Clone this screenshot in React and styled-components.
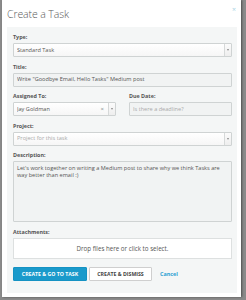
import React from "react";
import styled, { createGlobalStyle } from "styled-components";

const GlobalStyle = createGlobalStyle`
  html, body {
    margin: 0;
    padding: 0;
    background: #8a8a8a;
    font-family: "Open Sans", "DejaVu Sans", sans-serif;
  }
  * { box-sizing: border-box; }
`;

const Overlay = styled.div`
  width: 246px;
  height: 300px;
  padding-left: 2px;
  overflow: hidden;
`;

const Modal = styled.div`
  width: 239px;
  height: 297px;
  background: #ffffff;
  box-shadow: 1px 0 2px rgba(0, 0, 0, 0.45);
  padding: 0 4px 0 5px;
  display: flex;
  flex-direction: column;
`;

const Header = styled.header`
  height: 27px;
  display: flex;
  align-items: center;
  justify-content: space-between;
  position: relative;
`;

const Heading = styled.h1`
  margin: 0;
  font-size: 10.5px;
  font-weight: 300;
  color: #5a5a5a;
  letter-spacing: -0.1px;
`;

const Close = styled.span`
  position: absolute;
  right: 1px;
  top: 6px;
  font-size: 7px;
  line-height: 7px;
  color: #a9d3e4;
`;

const Panel = styled.div`
  background: #f4f6f6;
  padding: 6px 5px 12px 6px;
  display: flex;
  flex-direction: column;
`;

const Row = styled.div`
  display: flex;
  gap: 13px;
`;

const Field = styled.div`
  flex: 1;
  display: flex;
  flex-direction: column;
  margin-bottom: 5.5px;
`;

const Label = styled.label`
  height: 8px;
  line-height: 8px;
  font-size: 5.4px;
  font-weight: 700;
  color: #555;
  margin-bottom: 2px;
`;

const Box = styled.div`
  height: ${(p) => p.$h || 14}px;
  border: 1px solid #cfd3d3;
  border-radius: 1px;
  background: ${(p) =>
    p.$white ? "linear-gradient(#ffffff, #f6f6f6)" : "#f1f3f3"};
  display: flex;
  align-items: ${(p) => (p.$top ? "flex-start" : "center")};
  font-size: 5.6px;
  line-height: 7px;
  color: ${(p) => (p.$muted ? "#aaa" : "#555")};
  padding: ${(p) => (p.$top ? "3px 3px" : "0 0 0 3px")};
`;

const Value = styled.span`
  flex: 1;
  white-space: nowrap;
  overflow: hidden;
`;

const Clear = styled.span`
  color: #888;
  font-size: 6px;
  margin-right: 4px;
`;

const Arrow = styled.span`
  width: 7px;
  align-self: stretch;
  border-left: 1px solid #d6d9d9;
  background: linear-gradient(#fbfbfb, #eeeeee);
  display: flex;
  align-items: center;
  justify-content: center;
  &::after {
    content: "";
    border-left: 1.5px solid transparent;
    border-right: 1.5px solid transparent;
    border-top: 2px solid #888;
  }
`;

const Drop = styled.div`
  height: 21px;
  border: 1px solid #dde0e0;
  background: #ffffff;
  display: flex;
  align-items: center;
  justify-content: center;
  font-size: 6.2px;
  color: #555;
`;

const Actions = styled.div`
  display: flex;
  align-items: center;
  gap: 2px;
  margin-top: 3px;
`;

const Button = styled.button`
  height: 14px;
  padding: 0 ${(p) => (p.$primary ? 4 : 4)}px;
  width: ${(p) => p.$w}px;
  font-family: inherit;
  font-size: 5.2px;
  font-weight: 700;
  text-transform: uppercase;
  border-radius: 1px;
  border: 1px solid ${(p) => (p.$primary ? "#1592c3" : "#cfcfcf")};
  background: ${(p) => (p.$primary ? "#1a9acb" : "#ffffff")};
  color: ${(p) => (p.$primary ? "#ffffff" : "#444")};
  white-space: nowrap;
`;

const Cancel = styled.a`
  margin-left: 6px;
  font-size: 5.4px;
  font-weight: 700;
  color: #2b9fd2;
`;

function Select({ children, muted, clear }) {
  return (
    <Box $white $muted={muted}>
      <Value>{children}</Value>
      {clear && <Clear>×</Clear>}
      <Arrow />
    </Box>
  );
}

export default function App() {
  return (
    <>
      <GlobalStyle />
      <Overlay>
        <Modal>
          <Header>
            <Heading>Create a Task</Heading>
            <Close>×</Close>
          </Header>
          <Panel>
            <Field>
              <Label>Type:</Label>
              <Select>Standard Task</Select>
            </Field>
            <Field>
              <Label>Title:</Label>
              <Box>
                <Value>Write "Goodbye Email, Hello Tasks" Medium post</Value>
              </Box>
            </Field>
            <Row>
              <Field>
                <Label>Assigned To:</Label>
                <Select clear>Jay Goldman</Select>
              </Field>
              <Field>
                <Label>Due Date:</Label>
                <Box $muted>
                  <Value>Is there a deadline?</Value>
                </Box>
              </Field>
            </Row>
            <Field>
              <Label>Project:</Label>
              <Select muted>Project for this task</Select>
            </Field>
            <Field>
              <Label>Description:</Label>
              <Box $h={61} $top>
                Let's work together on writing a Medium post to share why we
                think Tasks are way better than email :)
              </Box>
            </Field>
            <Field>
              <Label>Attachments:</Label>
              <Drop>Drop files here or click to select.</Drop>
            </Field>
            <Actions>
              <Button $primary $w={74}>
                Create &amp; Go to Task
              </Button>
              <Button $w={63}>Create &amp; Dismiss</Button>
              <Cancel>Cancel</Cancel>
            </Actions>
          </Panel>
        </Modal>
      </Overlay>
    </>
  );
}
